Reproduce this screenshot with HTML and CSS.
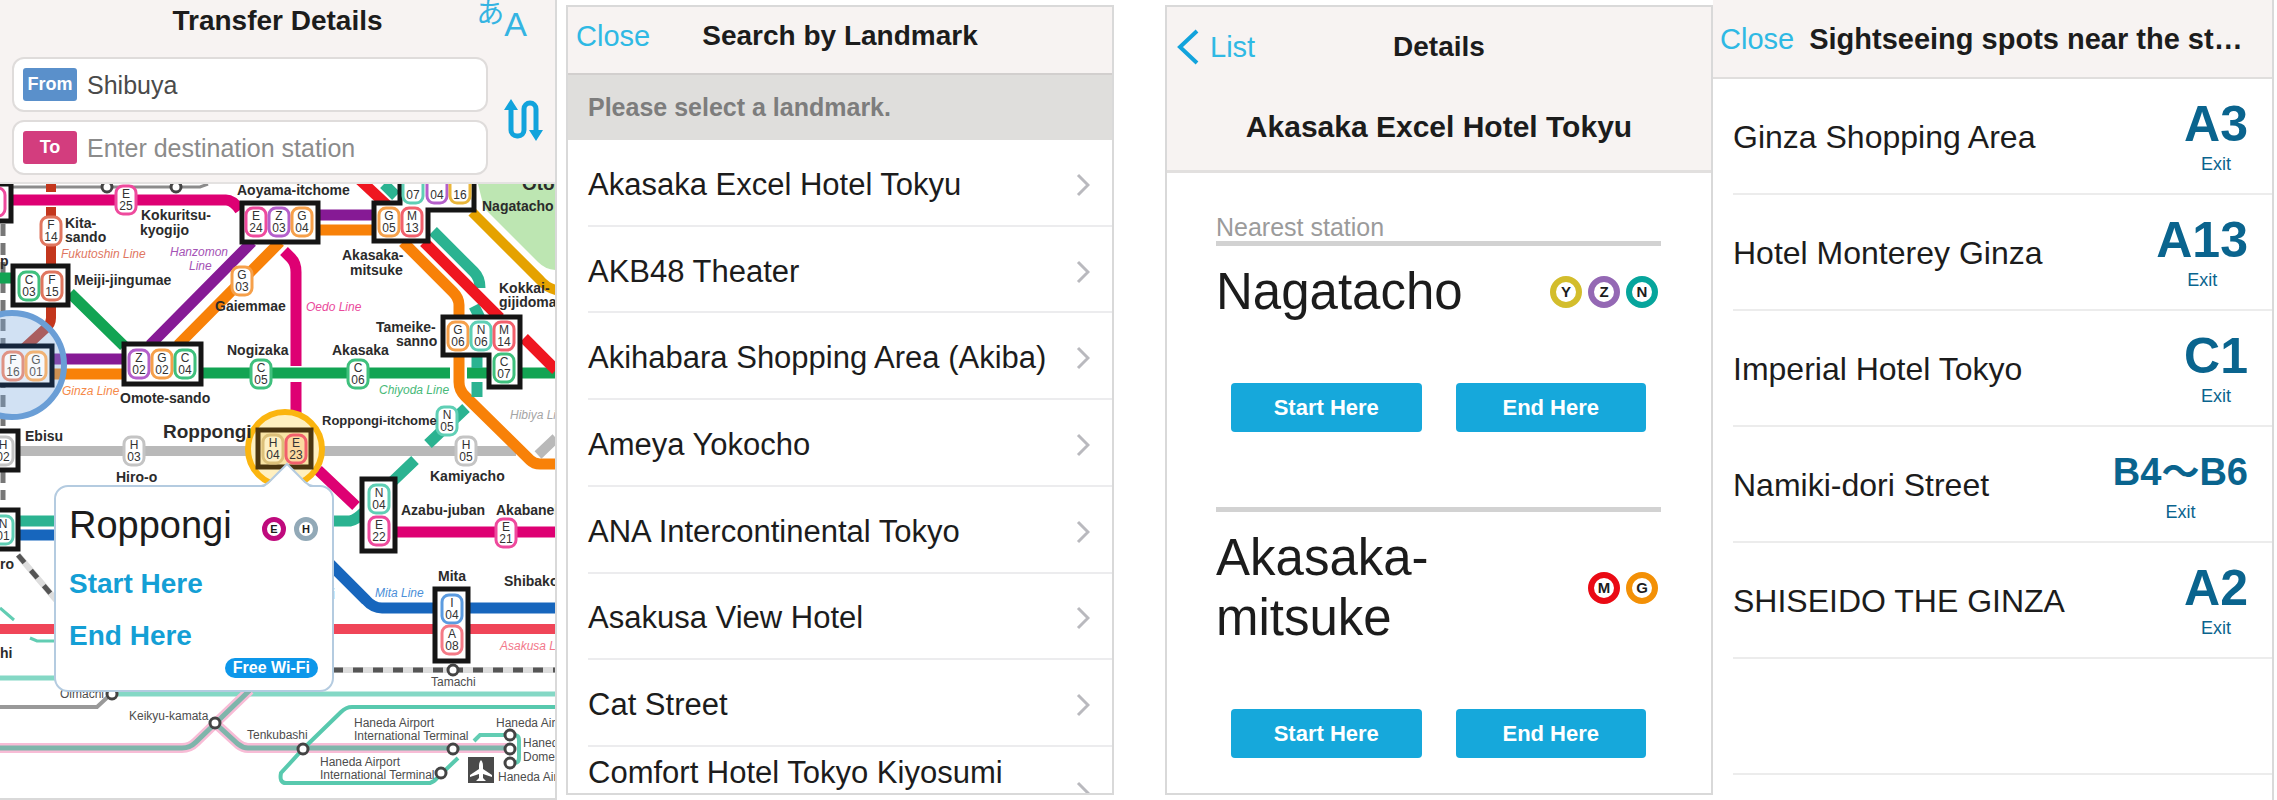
FILE: index.html
```html
<!DOCTYPE html>
<html lang="en">
<head>
<meta charset="utf-8">
<title>Tokyo Subway Navigation</title>
<link rel="stylesheet" href="styles.css">
</head>
<body>
<main class="screens">
  <section class="screen screen-transfer">
    <header class="transfer-head">
      <div class="title-row">
        <h1 class="title">Transfer Details</h1>
        <button class="lang" aria-label="Language"><span class="lang-ja" lang="ja">あ</span><span class="lang-en">A</span></button>
      </div>
      <div class="route">
        <div class="fields">
          <div class="field"><label class="tag tag-from" for="from">From</label><input class="field-input" id="from" type="text" value="Shibuya"></div>
          <div class="field"><label class="tag tag-to" for="to">To</label><input class="field-input" id="to" type="text" placeholder="Enter destination station"></div>
        </div>
        <button class="swap" aria-label="Swap stations">
          <svg width="40" height="46" viewBox="0 0 40 46" fill="none" stroke="#12a3dc" stroke-width="5">
            <path d="M8 10V33a6 6 0 0 0 6 6h1a6 6 0 0 0 6-6V12a6 6 0 0 1 6-6h0a6 6 0 0 1 6 6V36"/>
            <path d="M1 13L8 2L15 13ZM26 33L33 44L40 33Z" fill="#12a3dc" stroke="none"/>
          </svg>
        </button>
      </div>
    </header>
    <div class="map">
      <svg class="map-art" viewBox="0 184 556 614" preserveAspectRatio="xMinYMin slice" role="img" aria-label="Subway map around Roppongi">
        <defs>
          <rect id="pill" x="-10" y="-14" width="20" height="28" rx="7" fill="#fff" stroke-width="3"/>
          <circle id="node" r="5" fill="#fff" stroke="#444" stroke-width="3"/>
        </defs>
        <path d="M478 184H556V270Q546 270 538 262L484 208Z" fill="#bde6b2"/>
        <path d="M3 224V500" stroke="#777" stroke-width="5" stroke-dasharray="12 7" fill="none"/>

        <g class="thin">
          <path d="M12 187H200L208 184" stroke="#8c8c8c"/>
          <path d="M0 707H97L112 693" stroke="#999" stroke-width="4"/>
          <path d="M0 608L14 620M30 638L37 641H56" stroke="#62cdb3"/>
          <path d="M0 678H56M118 694H556" stroke="#84d8c5" stroke-width="5"/>
          <path d="M0 748H182Q190 748 196 742L250 690M215 723L238 744Q243 748 248 748H510" stroke="#f8bcd6" stroke-width="10"/>
          <path d="M0 748H182Q190 748 196 742L250 690M215 723L238 744Q243 748 248 748H510" stroke="#7fb5ab" stroke-width="5"/>
          <path d="M556 707H352Q346 707 341 712L303 749L281 773Q279 783 286 783H430Q434 782 438 777L458 758" stroke="#58c9ae" stroke-width="4"/>
          <path d="M474 741L480 735H514Q519 735 519 740V758Q519 763 514 763" stroke="#62cdb3" stroke-width="4"/>
        </g>
        <g class="rail">
          <path d="M18 555L56 600M333 670H556" stroke="#ddd" stroke-width="6"/>
          <path d="M18 555L56 600M333 670H556" stroke="#555" stroke-width="5" stroke-dasharray="10 10"/>
        </g>

        <g class="line">
          <path d="M12 200H226Q233 200 240 210" stroke="#de0073"/>
          <path d="M51 184V192M51 207V318Q51 324 46 328L20 352" stroke="#c3361d" stroke-width="10"/>
          <path d="M0 278H12M70 293L124 346M203 373H450M467 373H556" stroke="#12a453"/>
          <path d="M20 451H516M538 455L556 438" stroke="#b9b9b9" stroke-width="10"/>
          <path d="M54 359H124M150 345L252 242M320 215H374" stroke="#861a95"/>
          <path d="M54 374H124M178 345L280 242M320 230H374M403 242L453 292Q459 298 459 305V318M459 357V382Q459 390 465 396L530 460Q534 464 540 464H556" stroke="#f88108"/>
          <path d="M284 251L291 258Q296 263 296 272V366M296 382V430M318 470L356 506M396 532H556" stroke="#de0073"/>
          <path d="M384 184L396 196M433 231L474 272Q480 278 480 288M474 306L480 318M477 357V368M477 382V397M466 408L428 444M415 460L392 482M20 521H350Q356 520 364 512" stroke="#2bb391"/>
          <path d="M472 212L540 280Q547 288 556 290" stroke="#e5a200" stroke-width="10"/>
          <path d="M360 180L390 208M424 242L500 318M524 338L556 370" stroke="#ef1620"/>
          <path d="M20 535H56M330 564L366 600Q373 608 382 608H556" stroke="#1766bd"/>
          <path d="M0 629H556" stroke="#f04558" stroke-width="10"/>
        </g>

        <circle cx="12" cy="365" r="52" fill="#7aa9dd" fill-opacity=".35" stroke="#6a9ed6" stroke-width="6"/>
        <circle cx="285" cy="449" r="37" fill="#fff0c0" stroke="#fbb50f" stroke-width="6"/>

        <g class="station" fill="#fff" stroke="#151515" stroke-width="5">
          <path d="M-8 184H11V221H-8Z"/>
          <path d="M13 266H68V305H13Z"/>
          <path d="M-8 346H52V385H-8Z" stroke="#16263c" fill="#dfeaf7"/>
          <path d="M-8 431H18V470H-8Z"/>
          <path d="M-8 510H18V549H-8Z"/>
          <path d="M242 203H318V242H242Z"/>
          <path d="M400 180V203H374V241H428V210H474V180Z"/>
          <path d="M443 317H520V387H489V355H443Z"/>
          <path d="M124 344H201V384H124Z"/>
          <path d="M258 430H311V467H258Z" stroke="#4a3510" fill="#f8e3a4"/>
          <path d="M362 479H395V551H362Z"/>
          <path d="M435 589H468V661H435Z"/>
        </g>

        <g class="codes">
          <g class="c-e" transform="translate(-5 202)"><use href="#pill"/></g>
          <g class="c-e" transform="translate(126 200)"><use href="#pill"/><text y="-2">E</text><text y="10">25</text></g>
          <g class="c-f" transform="translate(51 231)"><use href="#pill"/><text y="-2">F</text><text y="10">14</text></g>
          <g class="c-c" transform="translate(29 286)"><use href="#pill"/><text y="-2">C</text><text y="10">03</text></g>
          <g class="c-f" transform="translate(52 286)"><use href="#pill"/><text y="-2">F</text><text y="10">15</text></g>
          <g class="c-e" transform="translate(256 222)"><use href="#pill"/><text y="-2">E</text><text y="10">24</text></g>
          <g class="c-z" transform="translate(279 222)"><use href="#pill"/><text y="-2">Z</text><text y="10">03</text></g>
          <g class="c-g" transform="translate(302 222)"><use href="#pill"/><text y="-2">G</text><text y="10">04</text></g>
          <g class="c-n" transform="translate(413 189)"><use href="#pill"/><text y="10">07</text></g>
          <g class="c-z" transform="translate(437 189)"><use href="#pill"/><text y="10">04</text></g>
          <g class="c-y" transform="translate(460 189)"><use href="#pill"/><text y="10">16</text></g>
          <g class="c-g" transform="translate(389 222)"><use href="#pill"/><text y="-2">G</text><text y="10">05</text></g>
          <g class="c-m" transform="translate(412 222)"><use href="#pill"/><text y="-2">M</text><text y="10">13</text></g>
          <g class="c-g" transform="translate(242 281)"><use href="#pill"/><text y="-2">G</text><text y="10">03</text></g>
          <g class="c-f c-tint" transform="translate(13 366)"><use href="#pill"/><text y="-2">F</text><text y="10">16</text></g>
          <g class="c-g c-tint" transform="translate(36 366)"><use href="#pill"/><text y="-2">G</text><text y="10">01</text></g>
          <g class="c-z" transform="translate(139 364)"><use href="#pill"/><text y="-2">Z</text><text y="10">02</text></g>
          <g class="c-g" transform="translate(162 364)"><use href="#pill"/><text y="-2">G</text><text y="10">02</text></g>
          <g class="c-c" transform="translate(185 364)"><use href="#pill"/><text y="-2">C</text><text y="10">04</text></g>
          <g class="c-c" transform="translate(261 374)"><use href="#pill"/><text y="-2">C</text><text y="10">05</text></g>
          <g class="c-c" transform="translate(358 374)"><use href="#pill"/><text y="-2">C</text><text y="10">06</text></g>
          <g class="c-g" transform="translate(458 336)"><use href="#pill"/><text y="-2">G</text><text y="10">06</text></g>
          <g class="c-n" transform="translate(481 336)"><use href="#pill"/><text y="-2">N</text><text y="10">06</text></g>
          <g class="c-m" transform="translate(504 336)"><use href="#pill"/><text y="-2">M</text><text y="10">14</text></g>
          <g class="c-c" transform="translate(504 368)"><use href="#pill"/><text y="-2">C</text><text y="10">07</text></g>
          <g class="c-n" transform="translate(447 421)"><use href="#pill"/><text y="-2">N</text><text y="10">05</text></g>
          <g class="c-h" transform="translate(466 451)"><use href="#pill"/><text y="-2">H</text><text y="10">05</text></g>
          <g class="c-h" transform="translate(134 451)"><use href="#pill"/><text y="-2">H</text><text y="10">03</text></g>
          <g class="c-h" transform="translate(3 451)"><use href="#pill"/><text y="-2">H</text><text y="10">02</text></g>
          <g class="c-sel" transform="translate(273 449)"><rect x="-10" y="-14" width="20" height="28" rx="7" fill="#fdf0c4" stroke-width="3"/><text y="-2">H</text><text y="10">04</text></g>
          <g class="c-m" transform="translate(296 449)"><rect x="-10" y="-14" width="20" height="28" rx="7" fill="#fbd9a0" stroke-width="3"/><text y="-2">E</text><text y="10">23</text></g>
          <g class="c-n" transform="translate(3 530)"><use href="#pill"/><text y="-2">N</text><text y="10">01</text></g>
          <g class="c-n" transform="translate(379 499)"><use href="#pill"/><text y="-2">N</text><text y="10">04</text></g>
          <g class="c-e" transform="translate(379 531)"><use href="#pill"/><text y="-2">E</text><text y="10">22</text></g>
          <g class="c-e" transform="translate(506 533)"><use href="#pill"/><text y="-2">E</text><text y="10">21</text></g>
          <g class="c-i" transform="translate(452 609)"><use href="#pill"/><text y="-2">I</text><text y="10">04</text></g>
          <g class="c-a" transform="translate(452 640)"><use href="#pill"/><text y="-2">A</text><text y="10">08</text></g>
        </g>

        <use href="#node" x="107" y="187"/><use href="#node" x="176" y="187"/>
        <use href="#node" x="112" y="694"/><use href="#node" x="215" y="723"/><use href="#node" x="303" y="749"/>
        <use href="#node" x="453" y="749"/><use href="#node" x="441" y="773"/><use href="#node" x="453" y="670"/>
        <use href="#node" x="510" y="735"/><use href="#node" x="510" y="749"/><use href="#node" x="510" y="763"/>
        <rect x="468" y="757" width="26" height="26" fill="#4a4a4a"/>
        <path d="M481 760Q483 762 483 766V769L492 775V777L483 774V778L486 781H476L479 778V774L470 777V775L479 769V766Q479 762 481 760Z" fill="#fff"/>

        <g class="names">
          <text x="237" y="195">Aoyama-itchome</text>
          <text x="141" y="220">Kokuritsu-</text><text x="140" y="235">kyogijo</text>
          <text x="65" y="228">Kita-</text><text x="65" y="242">sando</text>
          <text x="74" y="285">Meiji-jingumae</text>
          <text x="215" y="311">Gaiemmae</text>
          <text x="482" y="211">Nagatacho</text><text x="522" y="190" font-size="19">Oto</text>
          <text x="342" y="260">Akasaka-</text><text x="350" y="275">mitsuke</text>
          <text x="499" y="293">Kokkai-</text><text x="499" y="307">gijidomae</text>
          <text x="376" y="332">Tameike-</text><text x="396" y="346">sanno</text>
          <text x="120" y="403">Omote-sando</text>
          <text x="227" y="355">Nogizaka</text>
          <text x="332" y="355">Akasaka</text>
          <text x="322" y="425" class="name-tight">Roppongi-itchome</text>
          <text x="430" y="481">Kamiyacho</text>
          <text x="25" y="441">Ebisu</text>
          <text x="116" y="482">Hiro-o</text>
          <text x="401" y="515">Azabu-juban</text>
          <text x="496" y="515">Akabanebashi</text>
          <text x="438" y="581">Mita</text>
          <text x="504" y="586">Shibakoen</text>
          <text x="0" y="569">ro</text><text x="0" y="658">hi</text><text x="0" y="266">p</text><text x="331" y="599">i</text>
          <text class="name-big" x="163" y="438">Roppongi</text>
        </g>
        <g class="line-names">
          <text x="61" y="258" fill="#e0765f">Fukutoshin Line</text>
          <text x="170" y="256" fill="#a553b5">Hanzomon</text><text x="189" y="270" fill="#a553b5">Line</text>
          <text x="306" y="311" fill="#ea4a9c">Oedo Line</text>
          <text x="62" y="395" fill="#f58a4a">Ginza Line</text>
          <text x="379" y="394" fill="#47b978">Chiyoda Line</text>
          <text x="510" y="419" fill="#a5a5a5">Hibiya Line</text>
          <text x="375" y="597" fill="#4b8fd8">Mita Line</text>
          <text x="500" y="650" fill="#f2788a">Asakusa Line</text>
        </g>
        <g class="minor">
          <text x="60" y="698">Oimachi</text>
          <text x="129" y="720">Keikyu-kamata</text>
          <text x="247" y="739">Tenkubashi</text>
          <text x="431" y="686">Tamachi</text>
          <text x="354" y="727">Haneda Airport</text><text x="354" y="740">International Terminal</text>
          <text x="320" y="766">Haneda Airport</text><text x="320" y="779">International Terminal</text>
          <text x="496" y="727">Haneda Airport</text><text x="523" y="747">Haneda</text><text x="523" y="761">Domestic</text><text x="498" y="781">Haneda Airport</text>
        </g>
      </svg>
      <aside class="popup">
        <svg class="popup-tip" width="52" height="28" viewBox="0 0 52 28"><path d="M0 28Q5 25 8 22L26 3L44 22Q47 25 52 28Z" fill="#fff"/><path d="M0 25Q5 24 8 21L26 3L44 21Q47 24 52 25" fill="none" stroke="#b4cbe0" stroke-width="2"/></svg>
        <div class="popup-head">
          <h2 class="popup-name">Roppongi</h2>
          <span class="mark mark-small ring-e">E</span><span class="mark mark-small ring-h">H</span>
        </div>
        <button class="popup-action">Start Here</button>
        <button class="popup-action">End Here</button>
        <span class="wifi">Free Wi-Fi</span>
      </aside>
    </div>
  </section>

  <section class="screen screen-landmark">
    <header class="bar"><button class="link">Close</button><h1 class="title">Search by Landmark</h1></header>
    <p class="hint">Please select a landmark.</p>
    <ul class="landmarks">
      <li><a class="landmark" href="#">Akasaka Excel Hotel Tokyu<svg class="chev" viewBox="0 0 14 24"><path d="M2 2L12 12L2 22"/></svg></a></li>
      <li><a class="landmark" href="#">AKB48 Theater<svg class="chev" viewBox="0 0 14 24"><path d="M2 2L12 12L2 22"/></svg></a></li>
      <li><a class="landmark" href="#">Akihabara Shopping Area (Akiba)<svg class="chev" viewBox="0 0 14 24"><path d="M2 2L12 12L2 22"/></svg></a></li>
      <li><a class="landmark" href="#">Ameya Yokocho<svg class="chev" viewBox="0 0 14 24"><path d="M2 2L12 12L2 22"/></svg></a></li>
      <li><a class="landmark" href="#">ANA Intercontinental Tokyo<svg class="chev" viewBox="0 0 14 24"><path d="M2 2L12 12L2 22"/></svg></a></li>
      <li><a class="landmark" href="#">Asakusa View Hotel<svg class="chev" viewBox="0 0 14 24"><path d="M2 2L12 12L2 22"/></svg></a></li>
      <li><a class="landmark" href="#">Cat Street<svg class="chev" viewBox="0 0 14 24"><path d="M2 2L12 12L2 22"/></svg></a></li>
      <li><a class="landmark landmark-cut" href="#">Comfort Hotel Tokyo Kiyosumi<svg class="chev" viewBox="0 0 14 24"><path d="M2 2L12 12L2 22"/></svg></a></li>
    </ul>
  </section>

  <section class="screen screen-details">
    <header class="details-head">
      <div class="details-bar">
        <button class="link back"><svg width="22" height="36" viewBox="0 0 22 36" fill="none" stroke="#12a3dc" stroke-width="4"><path d="M20 2L3 18L20 34"/></svg>List</button>
        <h1 class="title">Details</h1>
      </div>
      <h2 class="place">Akasaka Excel Hotel Tokyu</h2>
    </header>
    <div class="stations">
      <p class="nearest">Nearest station</p>
      <article class="station-card">
        <div class="station-row"><h3 class="station-name">Nagatacho</h3><span class="marks"><span class="mark ring-y">Y</span><span class="mark ring-z">Z</span><span class="mark ring-n">N</span></span></div>
        <div class="actions"><button class="action">Start Here</button><button class="action">End Here</button></div>
      </article>
      <article class="station-card">
        <div class="station-row"><h3 class="station-name">Akasaka-<br>mitsuke</h3><span class="marks"><span class="mark ring-m">M</span><span class="mark ring-g">G</span></span></div>
        <div class="actions"><button class="action">Start Here</button><button class="action">End Here</button></div>
      </article>
    </div>
  </section>

  <section class="screen screen-sights">
    <header class="sights-bar"><button class="link">Close</button><h1 class="title title-cut">Sightseeing spots near the station</h1></header>
    <ul class="sights">
      <li class="sight">Ginza Shopping Area<span class="exit"><b class="exit-code">A3</b>Exit</span></li>
      <li class="sight">Hotel Monterey Ginza<span class="exit"><b class="exit-code">A13</b>Exit</span></li>
      <li class="sight">Imperial Hotel Tokyo<span class="exit"><b class="exit-code">C1</b>Exit</span></li>
      <li class="sight">Namiki-dori Street<span class="exit"><b class="exit-code exit-range">B4～B6</b>Exit</span></li>
      <li class="sight">SHISEIDO THE GINZA<span class="exit"><b class="exit-code">A2</b>Exit</span></li>
      <li class="sight"></li>
    </ul>
  </section>
</main>
</body>
</html>
```
FILE: styles.css
```css
* { box-sizing: border-box; }
body, h1, h2, h3, p, ul { margin: 0; padding: 0; }
ul { list-style: none; }
body {
  background: #fff;
  color: #1c1c1c;
  font-family: "Liberation Sans", "Noto Sans CJK JP", sans-serif;
}
button { border: 0; background: none; padding: 0; font: inherit; color: inherit; cursor: pointer; }
a { color: inherit; text-decoration: none; }

.screens { display: flex; height: 100vh; min-height: 800px; padding-right: 3px; overflow: hidden; }
.screen { display: flex; flex-direction: column; min-width: 0; overflow: hidden; border: 0 solid #d9d9d9; }
.screen-transfer { flex: 555 1 0; border-width: 0 2px 2px 0; }
.screen-landmark { flex: 544 1 0; margin: 5px 0 5px 9px; border-width: 2px; }
.screen-details { flex: 544 1 0; margin: 5px 0 5px 51px; border-width: 2px; }
.screen-sights { flex: 559 1 0; border-right-width: 2px; }

.title { font-size: 28px; line-height: 36px; font-weight: 700; text-align: center; }
.link { color: #2fb9e4; font-size: 29px; line-height: 36px; }

/* Transfer details */
.transfer-head { background: #f7f3f2; height: 184px; flex: none; padding: 0 12px; border-bottom: 2px solid #e4e2e1; }
.title-row { display: grid; grid-template-columns: 1fr auto 1fr; height: 57px; align-items: start; padding-top: 3px; }
.title-row .title { grid-column: 2; }
.lang { justify-self: end; margin-right: 16px; display: flex; color: #35b4e2; line-height: 34px; }
.lang-ja { font-size: 28px; line-height: 22px; }
.lang-en { font-size: 34px; line-height: 42px; }
.route { display: flex; align-items: center; gap: 15px; }
.fields { flex: 1; display: flex; flex-direction: column; gap: 8px; }
.field { display: flex; align-items: center; gap: 10px; height: 55px; padding: 0 9px; background: #fff; border: 2px solid #dfdcdb; border-radius: 12px; }
.tag { width: 54px; height: 33px; border-radius: 3px; color: #fff; font-size: 18px; line-height: 33px; font-weight: 700; text-align: center; flex: none; }
.tag-from { background: #5a90cb; }
.tag-to { background: #d33d7e; }
.field-input { flex: 1; min-width: 0; border: 0; padding: 0; outline: 0; background: none; color: #4a4a4a; font: 25px/36px "Liberation Sans", sans-serif; }
.field-input::placeholder { color: #8b8b8b; opacity: 1; }
.swap { width: 40px; height: 46px; margin-top: 8px; }
.swap svg { display: block; }

.map { position: relative; flex: 1; min-height: 0; overflow: hidden; }
.map-art { display: block; width: 100%; height: 100%; font-family: "Liberation Sans Narrow", "Liberation Sans", sans-serif; }
.thin, .rail, .line { fill: none; }
.thin { stroke-width: 3; }
.line { stroke-width: 11; }
.codes { font-size: 12px; }
.codes text { fill: #333; stroke: none; text-anchor: middle; }
.c-e { stroke: #ee4a9d; } .c-f { stroke: #e0765f; } .c-c { stroke: #3fc07d; } .c-z { stroke: #b45fcb; }
.c-g { stroke: #f6a04a; } .c-n { stroke: #5fcfb5; } .c-y { stroke: #eab63a; } .c-m { stroke: #f2606c; }
.c-h { stroke: #c4c4c4; } .c-i { stroke: #5b9be0; } .c-a { stroke: #f57a86; } .c-sel { stroke: #dcc07a; }
.c-tint { opacity: .75; }
.names { font-size: 14px; font-weight: 700; fill: #2b2b2b; }
.name-tight { font-size: 13px; }
.name-big { font-size: 19px; }
.line-names { font-size: 12px; font-style: italic; }
.minor { font-size: 12px; fill: #4d4d4d; }

.popup { position: absolute; left: 54px; top: 301px; width: 280px; height: 207px; padding: 16px 14px 13px 13px; background: #fff; border: 2px solid #b4cbe0; border-radius: 14px; display: flex; flex-direction: column; align-items: flex-start; }
.popup-tip { position: absolute; left: 205px; top: -26px; }
.popup-head { display: flex; align-items: center; align-self: stretch; gap: 8px; height: 44px; margin-bottom: 19px; }
.popup-name { flex: 1; font-size: 38px; line-height: 44px; font-weight: 400; }
.popup-head .mark { margin-top: 8px; }
.popup-action { color: #149fd5; font-size: 28px; line-height: 36px; font-weight: 700; margin-bottom: 16px; }
.wifi { align-self: flex-end; margin-top: -12px; padding: 0 8px; border-radius: 10px; background: #0d97ea; color: #fff; font-size: 16px; line-height: 20px; font-weight: 700; }

.mark { display: inline-flex; align-items: center; justify-content: center; width: 32px; height: 32px; border: 6px solid; border-radius: 50%; font-size: 15px; line-height: 16px; font-weight: 700; }
.mark-small { width: 24px; height: 24px; border-width: 5px; font-size: 11px; }
.ring-e { border-color: #bf0a7d; }
.ring-h { border-color: #92a9b7; }
.ring-y { border-color: #d3bd2c; }
.ring-z { border-color: #9468b4; }
.ring-n { border-color: #06a59c; }
.ring-m { border-color: #ea0a14; }
.ring-g { border-color: #f39006; }

/* Landmark search */
.bar { height: 68px; flex: none; padding: 11px 8px; background: #f7f3f2; border-bottom: 2px solid #d2cfce; display: grid; grid-template-columns: 1fr auto 1fr; align-items: start; }
.bar .link { justify-self: start; }
.hint { flex: none; padding: 0 20px; background: #dfdedc; color: #7d7d7d; font-size: 25px; line-height: 65px; font-weight: 700; }
.landmarks { flex: 1; min-height: 0; display: grid; grid-template-rows: repeat(7, minmax(0, 1fr)) 46px; overflow: hidden; }
.landmarks li { margin-left: 20px; border-bottom: 2px solid #ececee; min-height: 0; }
.landmarks li:last-child { border-bottom: 0; }
.landmark { display: flex; align-items: center; justify-content: space-between; height: 100%; padding: 5px 22px 0 0; font-size: 31px; line-height: 36px; white-space: nowrap; }
.landmark-cut { align-items: flex-start; padding-top: 8px; }
.landmark-cut .chev { margin-top: 26px; }
.chev { width: 14px; height: 24px; flex: none; fill: none; stroke: #b9b9be; stroke-width: 3; }

/* Place details */
.details-head { flex: none; height: 166px; padding: 22px 10px 0; background: #f7f3f2; border-bottom: 3px solid #e2e0df; }
.details-bar { display: grid; grid-template-columns: 1fr auto 1fr; align-items: center; }
.back { display: flex; gap: 11px; justify-self: start; align-items: center; }
.place { margin-top: 44px; font-size: 30px; line-height: 36px; text-align: center; }
.stations { padding: 40px 50px 0 49px; }
.nearest { color: #9b9b9b; font-size: 25px; line-height: 28px; }
.station-card { border-top: 5px solid #d2d2d2; height: 266px; padding-top: 16px; display: flex; flex-direction: column; justify-content: space-between; padding-bottom: 75px; }
.station-card:last-child { padding-bottom: 15px; }
.station-row { display: flex; align-items: center; justify-content: space-between; }
.station-name { font-size: 51px; line-height: 60px; font-weight: 400; }
.marks { display: flex; gap: 6px; margin-right: 3px; }
.actions { display: flex; gap: 34px; padding: 0 15px; }
.action { flex: 1; height: 49px; border-radius: 4px; background: #16a8db; color: #fff; font-size: 22px; line-height: 28px; font-weight: 700; }

/* Sightseeing list */
.sights-bar { flex: none; height: 79px; display: flex; align-items: center; gap: 15px; padding: 0 22px 0 7px; background: #f7f3f2; border-bottom: 2px solid #e0dedd; }
.title-cut { flex: 1; min-width: 0; font-size: 29px; text-align: left; white-space: nowrap; overflow: hidden; text-overflow: ellipsis; }
.sight { display: flex; align-items: center; justify-content: space-between; height: 116px; margin-left: 20px; padding: 2px 24px 0 0; border-bottom: 2px solid #ececec; font-size: 32px; line-height: 36px; }
.exit { display: flex; flex-direction: column; align-items: center; color: #0a648e; font-size: 18px; line-height: 22px; padding-bottom: 4px; }
.exit-code { font-size: 50px; line-height: 58px; }
.exit-range { font-size: 38px; }
```
